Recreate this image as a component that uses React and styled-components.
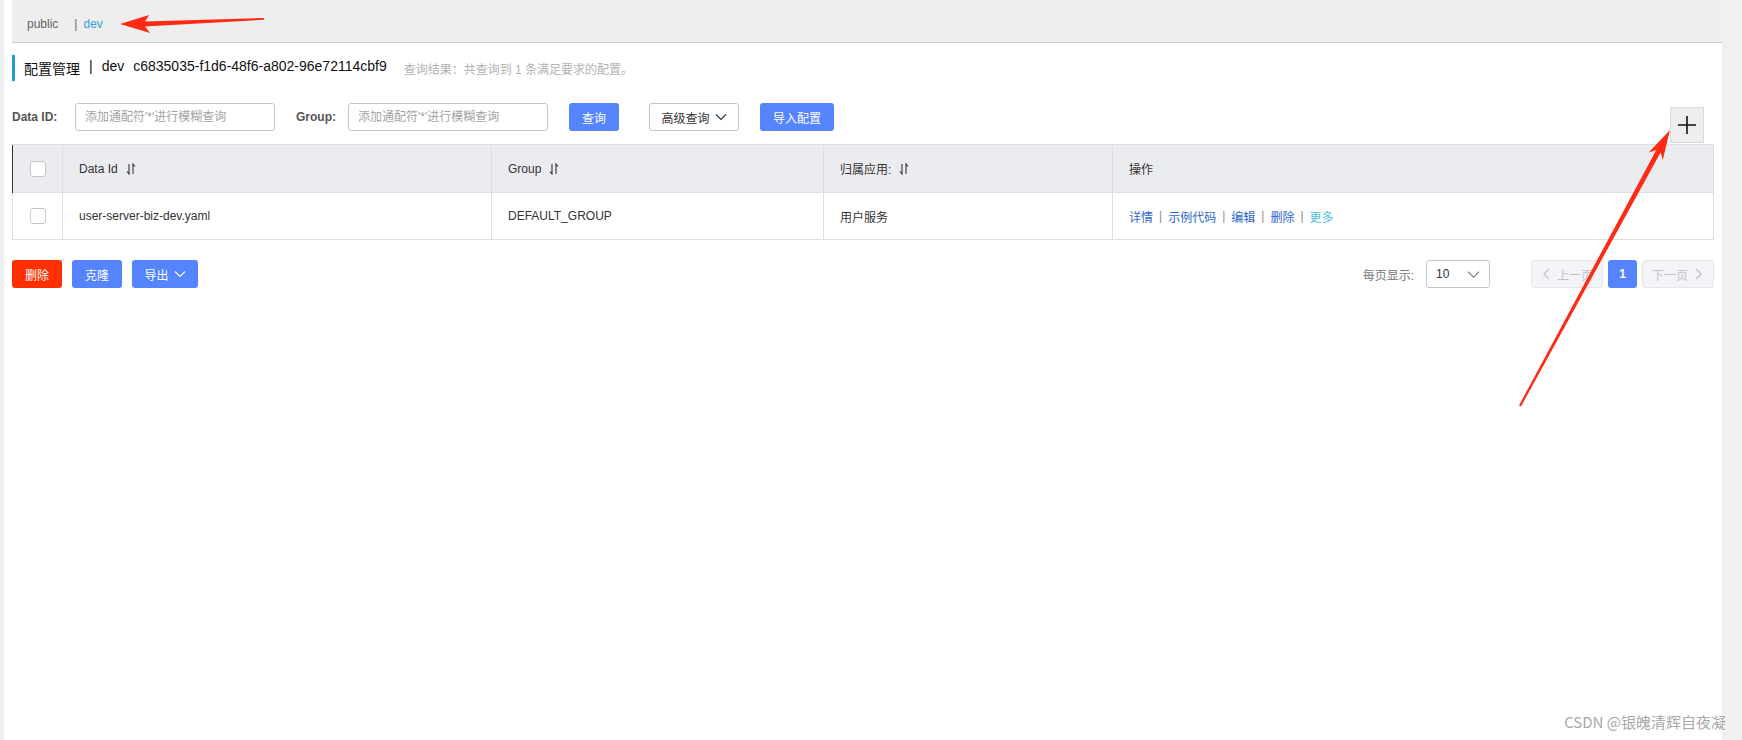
import React from 'react';
import styled, { createGlobalStyle } from 'styled-components';

const GlobalStyle = createGlobalStyle`
  html, body {
    margin: 0;
    padding: 0;
    background: #fff;
    font-family: "Liberation Sans", "Noto Sans CJK SC", sans-serif;
    font-size: 12px;
    color: #333;
  }
  * { box-sizing: border-box; }
`;

const Page = styled.div`
  position: relative;
  display: flex;
  width: 1742px;
  height: 740px;
  overflow: hidden;
`;

const Rail = styled.div`
  width: ${(p) => p.w}px;
  flex-shrink: 0;
  background: ${(p) => p.bg};
`;

const Main = styled.div`
  flex: 1;
  padding-left: 8px;
  display: flex;
  flex-direction: column;
`;

const TopBar = styled.div`
  height: 43px;
  background: #eeeeee;
  border-bottom: 1px solid #cdcdcd;
  display: flex;
  align-items: center;
  padding: 5px 0 0 15px;
  font-size: 12px;
`;

const NsItem = styled.span`
  color: ${(p) => (p.active ? '#33a3dc' : '#666')};
`;

const NsSep = styled.span`
  color: #666;
  margin: 0 6px 0 16px;
`;

const TitleRow = styled.div`
  margin-top: 12px;
  height: 26px;
  display: flex;
  align-items: center;
  border-left: 3px solid #1e9ad6;
  padding-left: 9px;
`;

const Title = styled.span`
  font-size: 14px;
  color: #111;
  display: flex;
  gap: 9px;
`;

const Summary = styled.span`
  margin-left: 17px;
  font-size: 12px;
  color: #b3b3b3;
`;

const SearchRow = styled.div`
  margin-top: 22px;
  display: flex;
  align-items: flex-start;
  padding-right: 18px;
`;

const Label = styled.span`
  width: ${(p) => p.w}px;
  flex-shrink: 0;
  height: 28px;
  line-height: 28px;
  font-weight: bold;
  color: #555;
`;

const Input = styled.div`
  width: 200px;
  height: 28px;
  border: 1px solid #c4c6cf;
  border-radius: 3px;
  padding-left: 9px;
  line-height: 26px;
  color: #a3a3a3;
  margin-right: ${(p) => p.gap}px;
`;

const Button = styled.div`
  height: 28px;
  width: ${(p) => p.w}px;
  border-radius: 3px;
  display: flex;
  align-items: center;
  justify-content: center;
  gap: 5px;
  font-size: 12px;
  background: ${(p) => (p.kind === 'danger' ? '#ff3000' : p.kind === 'normal' ? '#fff' : '#5584ff')};
  color: ${(p) => (p.kind === 'normal' ? '#333' : '#fff')};
  border: ${(p) => (p.kind === 'normal' ? '1px solid #c4c6cf' : 'none')};
  margin-right: ${(p) => p.gap || 0}px;
`;

const PlusButton = styled.div`
  margin-left: auto;
  margin-top: 4px;
  width: 34px;
  height: 36px;
  background: #eeeeee;
  border: 1px solid #dadada;
  display: flex;
  align-items: center;
  justify-content: center;
`;

const Table = styled.div`
  margin: 1px 8px 0 0;
  border: 1px solid #dcdee3;
`;

const Row = styled.div`
  display: grid;
  grid-template-columns: 50px 429px 332px 289px 1fr;
  height: ${(p) => (p.head ? 48 : 46)}px;
  background: ${(p) => (p.head ? '#ebecf0' : '#fff')};
  border-bottom: ${(p) => (p.head ? '1px solid #dcdee3' : 'none')};
  box-shadow: ${(p) => (p.head ? '-1px 0 0 #333' : 'none')};
`;

const Cell = styled.div`
  display: flex;
  align-items: center;
  justify-content: ${(p) => (p.center ? 'center' : 'flex-start')};
  padding-left: ${(p) => (p.center ? 0 : 16)}px;
  border-right: ${(p) => (p.last ? 'none' : '1px solid #dcdee3')};
  color: #333;
  gap: ${(p) => (p.tight ? 0 : 8)}px;
`;

const Checkbox = styled.span`
  width: 16px;
  height: 16px;
  border: 1px solid #c4c6cf;
  border-radius: 3px;
  background: #fff;
`;

const Link = styled.span`
  color: ${(p) => (p.light ? '#4fbde6' : '#2c68c8')};
`;

const LinkSep = styled.span`
  color: #a08a72;
  margin: 0 6px;
`;

const FooterRow = styled.div`
  margin-top: 20px;
  display: flex;
  align-items: center;
  padding-right: 8px;
`;

const Pager = styled.div`
  margin-left: auto;
  display: flex;
  align-items: center;
`;

const PagerLabel = styled.span`
  color: #777;
  margin-right: 12px;
`;

const Select = styled.div`
  width: 64px;
  height: 28px;
  border: 1px solid #c4c6cf;
  border-radius: 3px;
  display: flex;
  align-items: center;
  justify-content: space-between;
  padding: 0 9px 0 9px;
  color: #333;
  margin-right: 41px;
`;

const PageBtn = styled.div`
  height: 28px;
  width: ${(p) => p.w}px;
  border-radius: 3px;
  display: flex;
  align-items: center;
  justify-content: center;
  gap: 4px;
  background: ${(p) => (p.active ? '#5584ff' : '#f3f4f7')};
  border: ${(p) => (p.active ? 'none' : '1px solid #e4e6eb')};
  color: ${(p) => (p.active ? '#fff' : '#c3c3c3')};
  font-weight: ${(p) => (p.active ? 'bold' : 'normal')};
  margin-left: ${(p) => p.gap || 0}px;
`;

const Overlay = styled.svg`
  position: absolute;
  left: 0;
  top: 0;
  pointer-events: none;
`;

const Watermark = styled.div`
  position: absolute;
  right: 16px;
  top: 711px;
  font-family: "Noto Sans CJK SC", sans-serif;
  font-size: 15px;
  color: #a8a8a8;
  text-shadow: 1px 1px 0 #fff;
`;

const SortIcon = () => (
  <svg width="10" height="12" viewBox="0 0 10 12">
    <path d="M3 1 V11 L1 8.5 M7 11 V1 L9 3.5" stroke="#333" strokeWidth="1.1" fill="none" />
  </svg>
);

const Chevron = ({ dir = 'down', color = '#fff', size = 12 }) => (
  <svg width={size} height={size} viewBox="0 0 12 12">
    {dir === 'down' && <polyline points="1,3.5 6,8.5 11,3.5" stroke={color} strokeWidth="1.1" fill="none" />}
    {dir === 'left' && <polyline points="8,1 3,6 8,11" stroke={color} strokeWidth="1.3" fill="none" />}
    {dir === 'right' && <polyline points="4,1 9,6 4,11" stroke={color} strokeWidth="1.3" fill="none" />}
  </svg>
);

const links = ['详情', '示例代码', '编辑', '删除'];

export default function App() {
  return (
    <>
      <GlobalStyle />
      <Page>
        <Rail w={4} bg="#eceef1" />
        <Main>
          <TopBar>
            <NsItem>public</NsItem>
            <NsSep>|</NsSep>
            <NsItem active>dev</NsItem>
          </TopBar>

          <TitleRow>
            <Title>
              <span>配置管理</span>
              <span>|</span>
              <span>dev</span>
              <span>c6835035-f1d6-48f6-a802-96e72114cbf9</span>
            </Title>
            <Summary>查询结果：共查询到 1 条满足要求的配置。</Summary>
          </TitleRow>

          <SearchRow>
            <Label w={63}>Data ID:</Label>
            <Input gap={21}>添加通配符'*'进行模糊查询</Input>
            <Label w={52}>Group:</Label>
            <Input gap={21}>添加通配符'*'进行模糊查询</Input>
            <Button w={50} gap={30}>查询</Button>
            <Button w={90} gap={21} kind="normal">
              高级查询 <Chevron color="#333" />
            </Button>
            <Button w={74}>导入配置</Button>
            <PlusButton>
              <svg width="20" height="20" viewBox="0 0 20 20">
                <path d="M10 1 V19 M1 10 H19" stroke="#111" strokeWidth="1.6" />
              </svg>
            </PlusButton>
          </SearchRow>

          <Table>
            <Row head>
              <Cell center><Checkbox /></Cell>
              <Cell>Data Id <SortIcon /></Cell>
              <Cell>Group <SortIcon /></Cell>
              <Cell>归属应用: <SortIcon /></Cell>
              <Cell last>操作</Cell>
            </Row>
            <Row>
              <Cell center><Checkbox /></Cell>
              <Cell>user-server-biz-dev.yaml</Cell>
              <Cell>DEFAULT_GROUP</Cell>
              <Cell>用户服务</Cell>
              <Cell last tight>
                {links.map((l) => (
                  <React.Fragment key={l}>
                    <Link>{l}</Link>
                    <LinkSep>|</LinkSep>
                  </React.Fragment>
                ))}
                <Link light>更多</Link>
              </Cell>
            </Row>
          </Table>

          <FooterRow>
            <Button w={50} gap={10} kind="danger">删除</Button>
            <Button w={50} gap={10}>克隆</Button>
            <Button w={66}>
              导出 <Chevron />
            </Button>
            <Pager>
              <PagerLabel>每页显示:</PagerLabel>
              <Select>
                <span>10</span>
                <Chevron color="#888" size={13} />
              </Select>
              <PageBtn w={72}>
                <Chevron dir="left" color="#c3c3c3" /> 上一页
              </PageBtn>
              <PageBtn w={29} gap={5} active>1</PageBtn>
              <PageBtn w={72} gap={5}>
                下一页 <Chevron dir="right" color="#c3c3c3" />
              </PageBtn>
            </Pager>
          </FooterRow>
        </Main>
        <Rail w={20} bg="#f0f0f0" />

        <Overlay width="1742" height="740" viewBox="0 0 1742 740">
          <polygon
            fill="#ff2a14"
            points="120,24 149,15 145,21.5 264,18 264,19.8 145,26.5 150,33"
          />
          <polygon
            fill="#ff2a14"
            points="1670,130 1662.7,160.2 1660.7,152.3 1521,406.4 1519,405.6 1656.3,149.9 1648.7,152.6"
          />
        </Overlay>
        <Watermark>CSDN @银魄清辉自夜凝</Watermark>
      </Page>
    </>
  );
}
